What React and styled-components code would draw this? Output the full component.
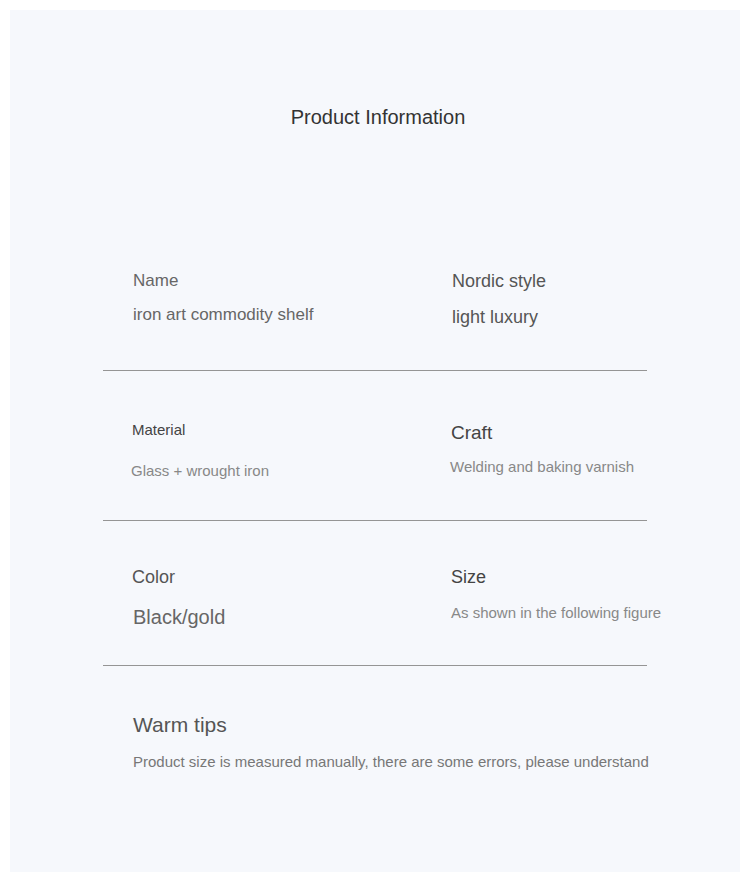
import React from "react";
import styled, { createGlobalStyle } from "styled-components";

const GlobalStyle = createGlobalStyle`
  body {
    margin: 0;
    background: #ffffff;
    font-family: "Liberation Sans", Arial, sans-serif;
  }
`;

const Panel = styled.div`
  margin: 10px;
  height: 862px;
  padding-top: 95px;
  box-sizing: border-box;
  background: #f6f8fc;
`;

const Title = styled.h1`
  margin: 0;
  padding-left: 6px;
  text-align: center;
  font-size: 20px;
  line-height: 24px;
  font-weight: 400;
  color: #333;
`;

const Sections = styled.div`
  width: 544px;
  margin-left: 93px;
`;

const Section = styled.div`
  display: grid;
  grid-template-columns: 319px 1fr;
  align-items: start;
  padding: ${(p) => p.$pt}px 0 ${(p) => p.$pb}px 30px;
  border-bottom: ${(p) => (p.$last ? "none" : "1px solid #959595")};
`;

const Cell = styled.div`
  display: flex;
  flex-direction: column;
  margin-top: ${(p) => p.$mt || 0}px;
  margin-left: ${(p) => p.$ml || 0}px;
  grid-column: ${(p) => (p.$wide ? "1 / span 2" : "auto")};
`;

const Label = styled.div`
  font-size: ${(p) => p.$size}px;
  line-height: ${(p) => p.$lh}px;
  color: ${(p) => p.$color};
  white-space: nowrap;
`;

const Value = styled.div`
  margin-top: ${(p) => p.$gap}px;
  margin-left: ${(p) => p.$ml || 0}px;
  font-size: ${(p) => p.$size}px;
  line-height: ${(p) => p.$lh}px;
  color: ${(p) => p.$color};
  white-space: nowrap;
`;

const App = () => {
  return (
    <>
      <GlobalStyle />
      <Panel>
        <Title>Product Information</Title>
        <Sections>
          <Section $pt={140} $pb={41}>
            <Cell>
              <Label $size={17} $lh={24} $color="#666">Name</Label>
              <Value $gap={10} $size={17} $lh={24} $color="#666">
                iron art commodity shelf
              </Value>
            </Cell>
            <Cell>
              <Label $size={18} $lh={24} $color="#555">Nordic style</Label>
              <Value $gap={12} $size={18} $lh={24} $color="#555">
                light luxury
              </Value>
            </Cell>
          </Section>
          <Section $pt={49} $pb={39}>
            <Cell $ml={-1}>
              <Label $size={15} $lh={20} $color="#444">Material</Label>
              <Value $gap={21} $ml={-1} $size={15} $lh={20} $color="#888">
                Glass + wrought iron
              </Value>
            </Cell>
            <Cell $mt={1} $ml={-1}>
              <Label $size={19} $lh={24} $color="#444">Craft</Label>
              <Value $gap={12} $ml={-1} $size={15} $lh={20} $color="#888">
                Welding and baking varnish
              </Value>
            </Cell>
          </Section>
          <Section $pt={43} $pb={35}>
            <Cell $mt={1} $ml={-1}>
              <Label $size={18} $lh={24} $color="#555">Color</Label>
              <Value $gap={15} $ml={1} $size={20} $lh={26} $color="#666">
                Black/gold
              </Value>
            </Cell>
            <Cell $mt={1} $ml={-1}>
              <Label $size={18} $lh={24} $color="#444">Size</Label>
              <Value $gap={14} $size={15} $lh={20} $color="#888">
                As shown in the following figure
              </Value>
            </Cell>
          </Section>
          <Section $pt={46} $pb={0} $last>
            <Cell $wide>
              <Label $size={21} $lh={26} $color="#555">Warm tips</Label>
              <Value $gap={14} $size={15} $lh={20} $color="#777">
                Product size is measured manually, there are some errors, please understand
              </Value>
            </Cell>
          </Section>
        </Sections>
      </Panel>
    </>
  );
};

export default App;
